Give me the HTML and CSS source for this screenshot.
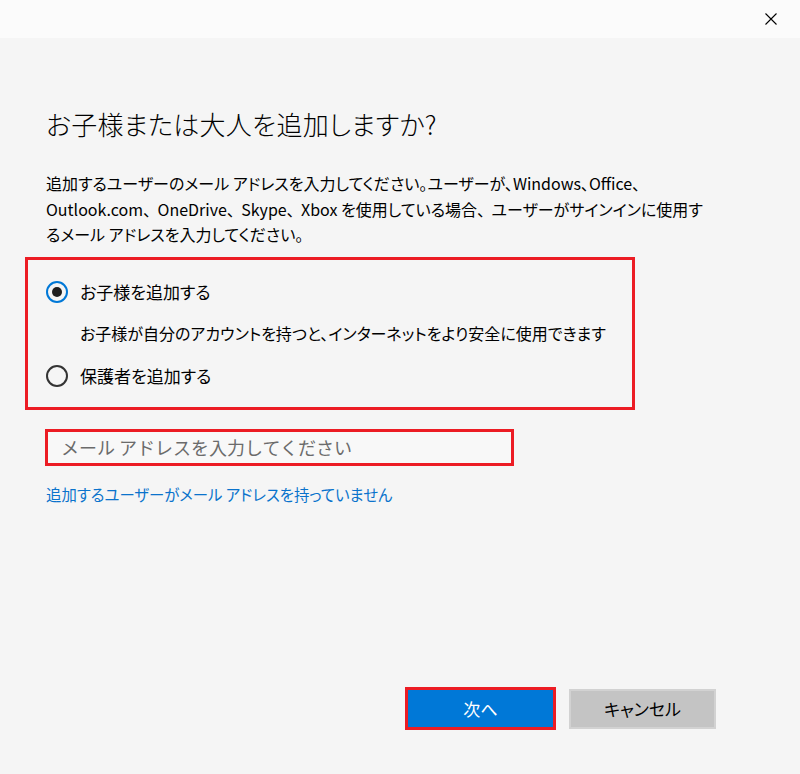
FILE: index.html
```html
<!DOCTYPE html>
<html lang="ja">
<head>
<meta charset="utf-8">
<title>お子様または大人を追加しますか?</title>
<link rel="stylesheet" href="styles.css">
</head>
<body>
<div class="window">
  <div class="titlebar">
    <button class="close" aria-label="閉じる">
      <svg width="12" height="12" viewBox="0 0 12 12"><path d="M0.5 0.5 L11.5 11.5 M11.5 0.5 L0.5 11.5" stroke="#000" stroke-width="1.1" fill="none"/></svg>
    </button>
  </div>
  <main class="content">
    <h1 class="title">お子様または大人を追加しますか?</h1>
    <p class="desc">追加するユーザーのメール アドレスを入力してください。ユーザーが、Windows、Office、<br>Outlook.com<span class="fw">、</span>OneDrive<span class="fw">、</span>Skype<span class="fw">、</span>Xbox を使用している場合<span class="fw">、</span>ユーザーがサインインに使用す<br>るメール アドレスを入力してください。</p>
    <div class="options">
      <label class="option">
        <span class="radio checked"><span class="dot"></span></span>
        <span>お子様を追加する</span>
      </label>
      <div class="subtext">お子様が自分のアカウントを持つと、インターネットをより安全に使用できます</div>
      <label class="option second">
        <span class="radio"></span>
        <span>保護者を追加する</span>
      </label>
    </div>
    <div class="input">メール アドレスを入力してください</div>
    <a class="link" href="#">追加するユーザーがメール アドレスを持っていません</a>
    <div class="footer">
      <button class="btn primary">次へ</button>
      <button class="btn secondary">キャンセル</button>
    </div>
  </main>
</div>
</body>
</html>
```

FILE: styles.css
```css
html, body {
  margin: 0;
  padding: 0;
}
body {
  background: #f5f5f5;
  font-family: "Noto Sans CJK JP", "Noto Sans", sans-serif;
  font-feature-settings: "palt";
  color: #000;
}
.window {
  height: 774px;
  display: flex;
  flex-direction: column;
}
.titlebar {
  height: 38px;
  background: #fbfbfb;
  display: flex;
  justify-content: flex-end;
  align-items: center;
  flex-shrink: 0;
}
.close {
  width: 46px;
  height: 38px;
  border: none;
  background: transparent;
  display: flex;
  align-items: center;
  justify-content: center;
  padding: 0;
  margin-right: 6px;
}
.close svg { display: block; }
.content {
  flex: 1;
  display: flex;
  flex-direction: column;
  padding-left: 46px;
}
.title {
  margin: 68px 0 0;
  font-size: 26px;
  line-height: 36px;
  font-weight: 300;
  letter-spacing: 0.3px;
}
.desc {
  margin: 29px 0 0;
  font-size: 16px;
  line-height: 25.5px;
  white-space: nowrap;
}
.fw {
  display: inline-block;
  width: 0.9em;
  text-align: left;
}
.options {
  margin: 9px 0 0 -21px;
  width: 586px;
  border: 3px solid #ec1c24;
  padding: 20px 0 19px 18px;
}
.option {
  display: flex;
  align-items: center;
  gap: 12px;
  height: 24px;
  font-size: 17px;
  line-height: 24px;
}
.radio {
  width: 22px;
  height: 22px;
  box-sizing: border-box;
  border: 2px solid #333;
  border-radius: 50%;
  display: flex;
  align-items: center;
  justify-content: center;
  flex-shrink: 0;
}
.radio.checked { border-color: #0078d7; }
.dot {
  width: 10px;
  height: 10px;
  border-radius: 50%;
  background: #1f1f1f;
}
.subtext {
  margin: 17px 0 0 34px;
  font-size: 16px;
  line-height: 24px;
}
.option.second { margin-top: 19px; }
.input {
  margin: 19px 0 0 -1px;
  width: 450px;
  height: 31px;
  border: 3px solid #ec1c24;
  background: #f8f8f8;
  box-sizing: content-box;
  padding-left: 13px;
  display: flex;
  align-items: center;
  font-size: 18px;
  font-feature-settings: normal;
  color: #6b6b6b;
}
.link {
  margin-top: 16px;
  font-size: 15.4px;
  line-height: 24px;
  color: #0a73cc;
  text-decoration: none;
  align-self: flex-start;
}
.footer {
  margin-top: auto;
  margin-bottom: 44px;
  display: flex;
  justify-content: flex-end;
  align-items: center;
  gap: 13px;
  padding-right: 84px;
}
.btn {
  font-family: inherit;
  font-feature-settings: "palt";
  font-size: 17px;
  box-sizing: border-box;
  padding: 0;
}
.primary {
  width: 151px;
  height: 43px;
  background: #0078d7;
  border: 3px solid #ec1c24;
  color: #fff;
}
.secondary {
  width: 147px;
  height: 40px;
  background: #c4c4c4;
  border: 2px solid #d2d2d2;
  color: #000;
}
```
